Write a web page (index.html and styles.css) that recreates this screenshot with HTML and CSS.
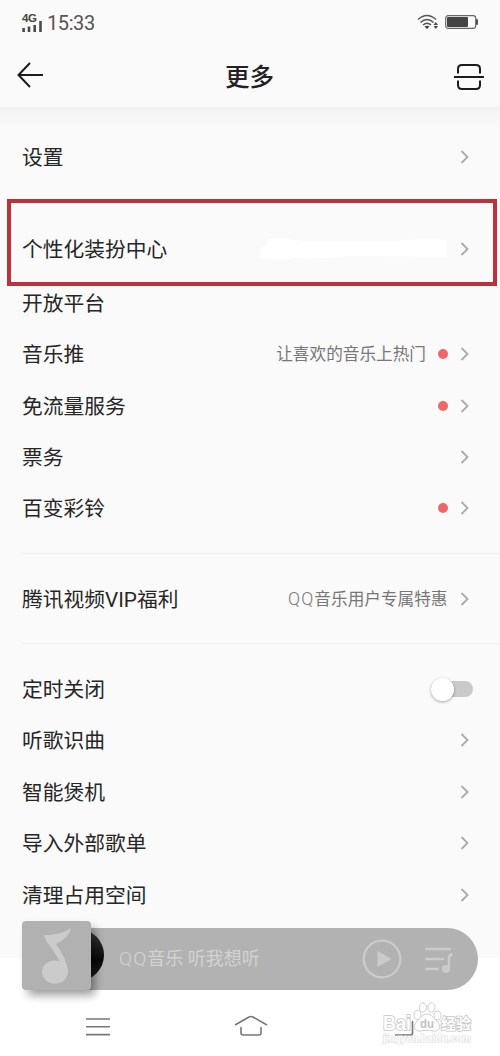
FILE: index.html
```html
<!DOCTYPE html>
<html lang="zh-CN">
<head>
<meta charset="utf-8">
<title>更多</title>
<link rel="stylesheet" href="styles.css">
</head>
<body>
<svg class="defs" width="0" height="0"><symbol id="chev" viewBox="0 0 10 16"><path d="M1.500 2 7.500 8 1.500 14" fill="none" stroke="#aaa" stroke-width="1.800"/></symbol></svg>
<div class="phone">
  <div class="status">
    <div class="signal">
      <span class="net">4G</span>
      <svg width="21" height="12" viewBox="0 0 21 12"><path d="M1.600 8v4M7 6.500V12M12.700 5v7M18.500 1v11" stroke="#4a4a4a" stroke-width="2.600"/></svg>
    </div>
    <span class="clock">15:33</span>
    <svg class="wifi" width="22" height="16" viewBox="0 0 22 16"><g fill="none" stroke="#555" stroke-width="1.500"><path d="M1 5.500Q10 -2.500 19 5.500M3.500 8.500Q10 2.500 16.500 8.500M6 11Q10 7.500 14 11"/></g><path d="M7.500 12.500Q10 11 12.500 12.500L10 15Z M16.500 11 18.800 8 21 11Z M16.500 12 21 12 18.800 15Z" fill="#444"/></svg>
    <svg width="33" height="14" viewBox="0 0 33 14"><rect x=".7" y=".7" width="30" height="12.600" rx="2.500" fill="none" stroke="#666" stroke-width="1.200"/><rect x="2" y="2" width="21" height="10" rx="1" fill="#444"/><path d="M31.500 4.500 33 5v4l-1.500.5Z" fill="#555" stroke="#555"/></svg>
  </div>
  <div class="header">
    <svg class="arrow" width="27" height="26" viewBox="0 0 27 26"><path d="M26 13H1.500M13 1 1.500 13 13 25" fill="none" stroke="#1c1c1c" stroke-width="2"/></svg>
    <h1 class="title">更多</h1>
    <svg width="32" height="26" viewBox="0 0 32 26"><path d="M1 13H31M5 9.500V5Q5 1 9 1H23Q27 1 27 5V9.500M5 16.500V21Q5 25 9 25H23Q27 25 27 21V16.500" fill="none" stroke="#1c1c1c" stroke-width="2"/></svg>
  </div>
  <div class="list">
    <div class="row first"><span class="label">设置</span><svg class="chev"><use href="#chev"/></svg></div>
    <div class="row featured"><span class="label">个性化装扮中心</span>
      <svg class="smudge" width="190" height="24" viewBox="0 0 190 24"><path d="M10 2Q22 0 35 3L60 5 130 5Q165 0 189 3V20L90 19Q70 22 40 21Q20 24 1 21Q4 16 0 13Q6 10 8 8Z" fill="#fff"/></svg>
      <svg class="chev"><use href="#chev"/></svg><div class="highlight"></div></div>
    <div class="row"><span class="label">开放平台</span></div>
    <div class="row"><span class="label">音乐推</span><span class="note">让喜欢的音乐上热门</span><i class="dot"></i><svg class="chev"><use href="#chev"/></svg></div>
    <div class="row"><span class="label">免流量服务</span><i class="dot"></i><svg class="chev"><use href="#chev"/></svg></div>
    <div class="row"><span class="label">票务</span><svg class="chev"><use href="#chev"/></svg></div>
    <div class="row"><span class="label">百变彩铃</span><i class="dot"></i><svg class="chev"><use href="#chev"/></svg></div>
    <div class="divider"></div>
    <div class="row"><span class="label">腾讯视频VIP福利</span><span class="note"><span class="latin">QQ</span>音乐用户专属特惠</span><svg class="chev"><use href="#chev"/></svg></div>
    <div class="divider"></div>
    <div class="row"><span class="label">定时关闭</span><span class="switch"><i class="knob"></i></span></div>
    <div class="row"><span class="label">听歌识曲</span><svg class="chev"><use href="#chev"/></svg></div>
    <div class="row"><span class="label">智能煲机</span><svg class="chev"><use href="#chev"/></svg></div>
    <div class="row"><span class="label">导入外部歌单</span><svg class="chev"><use href="#chev"/></svg></div>
    <div class="row"><span class="label">清理占用空间</span><svg class="chev"><use href="#chev"/></svg></div>
  </div>
  <div class="player">
    <div class="disc"></div>
    <div class="cover"><svg width="69" height="69" viewBox="0 0 69 69"><ellipse cx="33" cy="51" rx="13" ry="11.500" fill="#cbcbcb"/><path d="M22 14Q27 15 33 13Q42 12 49 7Q47 17 34 23Q45 38 46 51L40 46Q35 34 28 25Q23 19 22 14Z" fill="#cbcbcb"/></svg></div>
    <span class="song"><span class="latin">QQ</span>音乐 听我想听</span>
    <svg class="play" width="40" height="40" viewBox="0 0 40 40"><circle cx="20" cy="20" r="18.300" fill="none" stroke="#cbcbcb" stroke-width="2.300"/><path d="M15.500 12 29.500 20 15.500 28Z" fill="#cbcbcb"/></svg>
    <svg width="30" height="28" viewBox="0 0 30 28"><path d="M1 4H27M1 14H20M1 24H15" fill="none" stroke="#cbcbcb" stroke-width="2.500"/><path d="M25 23V13Q25 10 28.500 9" fill="none" stroke="#cbcbcb" stroke-width="2.500"/><circle cx="22" cy="24" r="4" fill="#cbcbcb"/></svg>
  </div>
  <div class="nav">
    <svg width="24" height="20" viewBox="0 0 24 20"><path d="M0 2H24M0 9.800H24M0 17.600H24" stroke="#777" stroke-width="1.600"/></svg>
    <svg width="34" height="22" viewBox="0 0 34 22"><path d="M1 10 15 2Q17 1 19 2L33 10M7 12V18Q7 20 9 20H25Q27 20 27 18V12" fill="none" stroke="#777" stroke-width="1.600"/></svg>
    <div class="back">
      <svg class="mark" width="100" height="48" viewBox="0 0 100 48">
        <g class="mark-text"><text x="5" y="28.500" class="brand" textLength="28" lengthAdjust="spacingAndGlyphs">Bai</text></g>
        <path d="M17 34H32.500Q34.500 34 34.500 32V20" fill="none" stroke="#777" stroke-width="1.600"/>
        <g fill="#fff" stroke="#cdcdcd" stroke-width="1"><ellipse cx="39.500" cy="14" rx="3.500" ry="4.500"/><ellipse cx="45" cy="6.500" rx="3.500" ry="4.700"/><ellipse cx="53.500" cy="6.500" rx="3.500" ry="4.700"/><ellipse cx="59.500" cy="14.500" rx="3.500" ry="4.500"/><path d="M49 13C54 13 55 17 59 20C65 27 60 31 55 30C51 29 47 29 43 30C37 31 34 26 39 20C43 17 44 13 49 13Z"/></g>
        <text x="42" y="27" class="du" textLength="14" lengthAdjust="spacingAndGlyphs">du</text>
        <g class="mark-text"><text x="63" y="28" class="exp" textLength="30" lengthAdjust="spacingAndGlyphs">经验</text><text x="5" y="41" class="url" textLength="88" lengthAdjust="spacingAndGlyphs">jingyan.baidu.com</text></g>
      </svg></div>
  </div>
</div>
</body>
</html>
```
FILE: styles.css
```css
* { box-sizing: border-box; }
body { margin: 0; font-family: Roboto, "Noto Sans CJK SC", sans-serif; color: #262626; }
.defs { position: absolute; }
.phone { position: relative; width: 500px; height: 1056px; overflow: hidden; display: flex; flex-direction: column; background: #fff; }
.status { height: 46px; flex: none; display: flex; align-items: center; padding: 0 22px 2px; background: #fafafa; }
.signal { display: flex; flex-direction: column; width: 25px; height: 19px; }
.signal svg { flex: none; margin-top: -3px; }
.net { font: bold 11.500px/10px "Liberation Sans", sans-serif; letter-spacing: -.4px; color: #444; }
.clock { font-size: 20px; line-height: 24px; margin-top: 2px; color: #555; letter-spacing: -.4px; flex: 1; }
.wifi { margin-right: 6px; }
.header { height: 61px; flex: none; display: flex; align-items: center; justify-content: space-between; padding: 0 15px 0 17px; background: #fafafa; }
.arrow { margin-bottom: 3px; }
.title { margin: 2px 0 0 2px; font-size: 24.600px; line-height: 34px; font-weight: 500; color: #222; }
.list { height: 851px; flex: none; padding: 24px 0 0 22px; background: linear-gradient(#f2f2f2, #fafafa 22px); }
.row { position: relative; height: 51.400px; display: flex; align-items: center; padding-right: 30px; }
.first { margin-bottom: 41px; }
.featured { margin-bottom: 2.300px; }
.label { flex: 1; font-size: 20.750px; line-height: 30px; padding-top: 2px; }
.note { font-size: 16.650px; line-height: 24px; padding-top: 2px; color: #777; margin-right: 12.500px; }
.note + .dot { margin-left: -1px; }
.latin { font-size: 1.070em; line-height: 1; letter-spacing: 1.100px; font-weight: 300; }
.chev { width: 10px; height: 16px; flex: none; }
.dot { width: 10px; height: 10px; border-radius: 50%; background: #ef6868; margin-right: 12.500px; }
.smudge { margin-right: 12.500px; }
.highlight { position: absolute; left: -15px; top: -24px; width: 490px; height: 87px; border: 4px solid #b9323c; }
.divider { height: 1px; margin: 18.600px 0 19.400px; background: #eee; }
.switch { width: 42px; height: 16px; border-radius: 8px; background: #cacaca; margin-right: -2.500px; display: flex; align-items: center; }
.knob { width: 23px; height: 23px; flex: none; border-radius: 50%; background: #fff; box-shadow: 0 1px 3px rgba(0,0,0,.35); }
.player { position: absolute; left: 22px; top: 928px; width: 456px; height: 62px; border-radius: 8px 31px 31px 8px; background: #b2b2b2; display: flex; align-items: center; padding: 0 24px 0 97px; }
.cover { position: absolute; left: 0; top: -7px; width: 69px; height: 69px; border-radius: 4px; background: #b1b1b1; box-shadow: 5px 6px 10px -1px rgba(0,0,0,.4); }
.disc { position: absolute; left: 30px; top: 1px; width: 52px; height: 52px; border-radius: 50%; background: linear-gradient(#3a3a3a, #080808 60%, #222); }
.song { flex: 1; font-size: 18px; line-height: 26px; color: #d2d2d2; white-space: nowrap; }
.play { margin: 0 22px 0 0; }
.nav { flex: 1; display: flex; align-items: flex-end; justify-content: space-between; padding: 0 84px 19px 86px; }
.back { position: relative; height: 20px; width: 24px; }
.mark { position: absolute; left: -14px; top: -16px; }
.mark-text { fill: #fff; stroke: #c6c6c6; stroke-width: 1.600px; paint-order: stroke; font-family: "Liberation Sans", "Noto Sans CJK SC", sans-serif; font-weight: bold; }
.brand { font-size: 20px; }
.du { font: bold 13px "Liberation Sans", sans-serif; fill: #c4c4c4; }
.exp { font-size: 15px; }
.url { font-size: 10px; stroke: #ddd; stroke-width: 1.200px; }
```
